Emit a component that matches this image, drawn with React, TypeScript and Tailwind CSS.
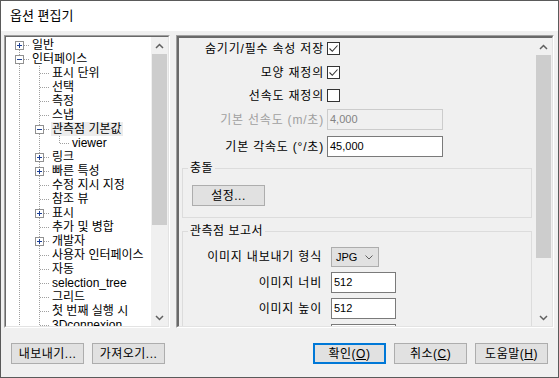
import React from "react";

type TreeRow = {
  label: string;
  lv: number;
  box?: "+" | "-";
  up?: boolean;
  down?: boolean;
  selected?: boolean;
};

const TREE: TreeRow[] = [
  { label: "일반", lv: 0, box: "+", up: false },
  { label: "인터페이스", lv: 0, box: "-" },
  { label: "표시 단위", lv: 1 },
  { label: "선택", lv: 1 },
  { label: "측정", lv: 1 },
  { label: "스냅", lv: 1 },
  { label: "관측점 기본값", lv: 1, box: "-", selected: true },
  { label: "viewer", lv: 2, down: false },
  { label: "링크", lv: 1, box: "+" },
  { label: "빠른 특성", lv: 1, box: "+" },
  { label: "수정 지시 지정", lv: 1 },
  { label: "참조 뷰", lv: 1 },
  { label: "표시", lv: 1, box: "+" },
  { label: "추가 및 병합", lv: 1 },
  { label: "개발자", lv: 1, box: "+" },
  { label: "사용자 인터페이스", lv: 1 },
  { label: "자동", lv: 1 },
  { label: "selection_tree", lv: 1 },
  { label: "그리드", lv: 1 },
  { label: "첫 번째 실행 시", lv: 1 },
  { label: "3Dconnexion", lv: 1 },
];

const DOTS = { stroke: "#a0a0a0", strokeDasharray: "1 1", strokeWidth: 1 };

function ThroughCell() {
  return (
    <svg width={20} height={14} className="shrink-0" shapeRendering="crispEdges">
      <line x1={9.5} y1={0} x2={9.5} y2={14} {...DOTS} />
    </svg>
  );
}

function NodeCell({ row }: { row: TreeRow }) {
  const up = row.up !== false;
  const down = row.down !== false;
  return (
    <svg width={20} height={14} className="shrink-0" shapeRendering="crispEdges">
      {up && <line x1={9.5} y1={0} x2={9.5} y2={7} {...DOTS} />}
      {down && <line x1={9.5} y1={8} x2={9.5} y2={14} {...DOTS} />}
      <line x1={10} y1={7.5} x2={20} y2={7.5} {...DOTS} />
      {row.box && (
        <>
          <rect x={5.5} y={3.5} width={8} height={8} fill="#ffffff" stroke="#919191" />
          <path d="M7 7.5h5" stroke="#1c3f95" />
          {row.box === "+" && <path d="M9.5 5v5" stroke="#1c3f95" />}
        </>
      )}
    </svg>
  );
}

function ScrollBar({ thumb }: { thumb: string }) {
  return (
    <div className="flex w-[17px] shrink-0 flex-col bg-[#f0f0f0]">
      <div className="flex h-[17px] shrink-0 items-center justify-center">
        <svg width={9} height={6}>
          <path d="M1 5l3.5-3.5L8 5" fill="none" stroke="#606060" strokeWidth={1.5} />
        </svg>
      </div>
      <div className="flex-1">
        <div className={`mx-[1px] bg-[#cdcdcd] ${thumb}`} />
      </div>
      <div className="flex h-[17px] shrink-0 items-center justify-center">
        <svg width={9} height={6}>
          <path d="M1 1l3.5 3.5L8 1" fill="none" stroke="#606060" strokeWidth={1.5} />
        </svg>
      </div>
    </div>
  );
}

function Check({ checked }: { checked?: boolean }) {
  return (
    <span className="flex h-[13px] w-[13px] items-center justify-center border border-[#333333] bg-white">
      {checked && (
        <svg width={11} height={11} viewBox="0 0 11 11">
          <path d="M1.5 5.5l2.8 2.8L9.5 2.5" fill="none" stroke="#333333" strokeWidth={1.1} />
        </svg>
      )}
    </span>
  );
}

function Button({
  children,
  primary,
}: {
  children: React.ReactNode;
  primary?: boolean;
}) {
  return (
    <button
      type="button"
      className={`flex h-[21px] w-[73px] items-center justify-center bg-[#e1e1e1] text-[12px] leading-none tracking-[0.5px] text-black ${
        primary ? "border-2 border-[#0078d7]" : "border border-[#adadad]"
      }`}
    >
      {children}
    </button>
  );
}

function Label({ children, w, muted }: { children: React.ReactNode; w: string; muted?: boolean }) {
  return (
    <span
      className={`${w} whitespace-nowrap text-right text-[12px] tracking-[0.8px] ${
        muted ? "text-[#a0a0a0]" : ""
      }`}
    >
      {children}
    </span>
  );
}

export default function App() {
  return (
    <div className="flex h-[378px] w-[559px] flex-col overflow-hidden border border-[#5a5a5a] bg-[#f0f0f0] font-['Liberation_Sans','Noto_Sans_CJK_KR',sans-serif] text-[11px] text-black">
      {/* TITLE */}
      <div className="flex h-[30px] shrink-0 items-center bg-white pl-[9px] text-[13px]">
        옵션 편집기
      </div>

      {/* BODY */}
      <div className="flex shrink-0 gap-[6px] pl-[3px] pr-[4px] pt-[4px]">
        {/* TREE */}
        <div className="h-[293px] w-[166px] shrink-0 border border-[#a0a0a0] border-r-white border-b-white">
          <div className="flex h-full border border-[#696969] border-r-[#e3e3e3] border-b-[#e3e3e3] bg-white">
            <div className="flex-1 overflow-hidden pl-[4px] pt-[1px]">
              {TREE.map((row) => (
                <div key={row.label} className="flex h-[14px] items-center">
                  {row.lv >= 1 && <ThroughCell />}
                  {row.lv >= 2 && <ThroughCell />}
                  <NodeCell row={row} />
                  <span
                    className={`ml-[1px] whitespace-nowrap px-[1px] text-[12px] leading-[14px] ${
                      row.selected ? "bg-[#ececec]" : ""
                    }`}
                  >
                    {row.label}
                  </span>
                </div>
              ))}
            </div>
            <ScrollBar thumb="h-[171px]" />
          </div>
        </div>

        {/* OPTIONS */}
        <div className="h-[293px] w-[378px] shrink-0 border border-[#a0a0a0] border-r-white border-b-white">
          <div className="flex h-full border-2 border-[#696969] border-r border-b border-r-[#e3e3e3] border-b-[#e3e3e3]">
            <div className="flex-1 overflow-hidden">
              <div className="mt-[4px] flex h-[13px] items-center">
                <Label w="w-[145px]">숨기기/필수 속성 저장</Label>
                <span className="ml-[3px]">
                  <Check checked />
                </span>
              </div>
              <div className="mt-[11px] flex h-[13px] items-center">
                <Label w="w-[145px]">모양 재정의</Label>
                <span className="ml-[3px]">
                  <Check checked />
                </span>
              </div>
              <div className="mt-[10px] flex h-[13px] items-center">
                <Label w="w-[145px]">선속도 재정의</Label>
                <span className="ml-[3px]">
                  <Check />
                </span>
              </div>
              <div className="mt-[7px] flex h-[21px] items-center">
                <Label w="w-[145px]" muted>
                  기본 선속도 (m/초)
                </Label>
                <span className="ml-[3px] flex h-[21px] w-[116px] items-center border border-[#cccccc] bg-[#f0f0f0] pl-[2px] text-[#838383]">
                  4,000
                </span>
              </div>
              <div className="mt-[6px] flex h-[21px] items-center">
                <Label w="w-[145px]">기본 각속도 (°/초)</Label>
                <span className="ml-[3px] flex h-[21px] w-[116px] items-center border border-[#7a7a7a] bg-white pl-[2px]">
                  45,000
                </span>
              </div>

              <fieldset className="mx-[3px] mt-[4px] border border-[#dcdcdc] pb-[11px]">
                <legend className="ml-[5px] px-[2px] text-[12px] leading-[14px] tracking-[0.5px]">충돌</legend>
                <div className="ml-[9px] mt-[10px]">
                  <Button>설정...</Button>
                </div>
              </fieldset>

              <fieldset className="mx-[3px] mt-[6px] border border-[#dcdcdc] pb-[20px]">
                <legend className="ml-[5px] px-[2px] text-[12px] leading-[14px] tracking-[0.5px]">
                  관측점 보고서
                </legend>
                <div className="mt-[9px] flex h-[20px] items-center">
                  <Label w="w-[139px]">이미지 내보내기 형식</Label>
                  <span className="ml-[9px] flex h-[20px] w-[48px] items-center justify-between border border-[#adadad] bg-[#e1e1e1] pl-[4px] pr-[5px]">
                    JPG
                    <svg width={8} height={5}>
                      <path d="M0.5 0.5l3.5 3.5 3.5-3.5" fill="none" stroke="#606060" />
                    </svg>
                  </span>
                </div>
                <div className="mt-[5px] flex h-[21px] items-center">
                  <Label w="w-[139px]">이미지 너비</Label>
                  <span className="ml-[9px] flex h-[21px] w-[65px] items-center border border-[#7a7a7a] bg-white pl-[2px]">
                    512
                  </span>
                </div>
                <div className="mt-[5px] flex h-[21px] items-center">
                  <Label w="w-[139px]">이미지 높이</Label>
                  <span className="ml-[9px] flex h-[21px] w-[65px] items-center border border-[#7a7a7a] bg-white pl-[2px]">
                    512
                  </span>
                </div>
                <div className="mt-[5px] flex h-[21px] items-center">
                  <span className="w-[139px]" />
                  <span className="ml-[9px] h-[21px] w-[65px] border border-[#7a7a7a] bg-white" />
                </div>
              </fieldset>
            </div>
            <ScrollBar thumb="h-[203px]" />
          </div>
        </div>
      </div>

      {/* FOOTER */}
      <div className="flex shrink-0 items-center justify-between pl-[10px] pr-[10px] pt-[15px]">
        <div className="flex gap-[8px]">
          <Button>내보내기...</Button>
          <Button>가져오기...</Button>
        </div>
        <div className="flex gap-[8px]">
          <Button primary>
            확인(<span className="underline">O</span>)
          </Button>
          <Button>
            취소(<span className="underline">C</span>)
          </Button>
          <Button>
            도움말(<span className="underline">H</span>)
          </Button>
        </div>
      </div>
    </div>
  );
}
